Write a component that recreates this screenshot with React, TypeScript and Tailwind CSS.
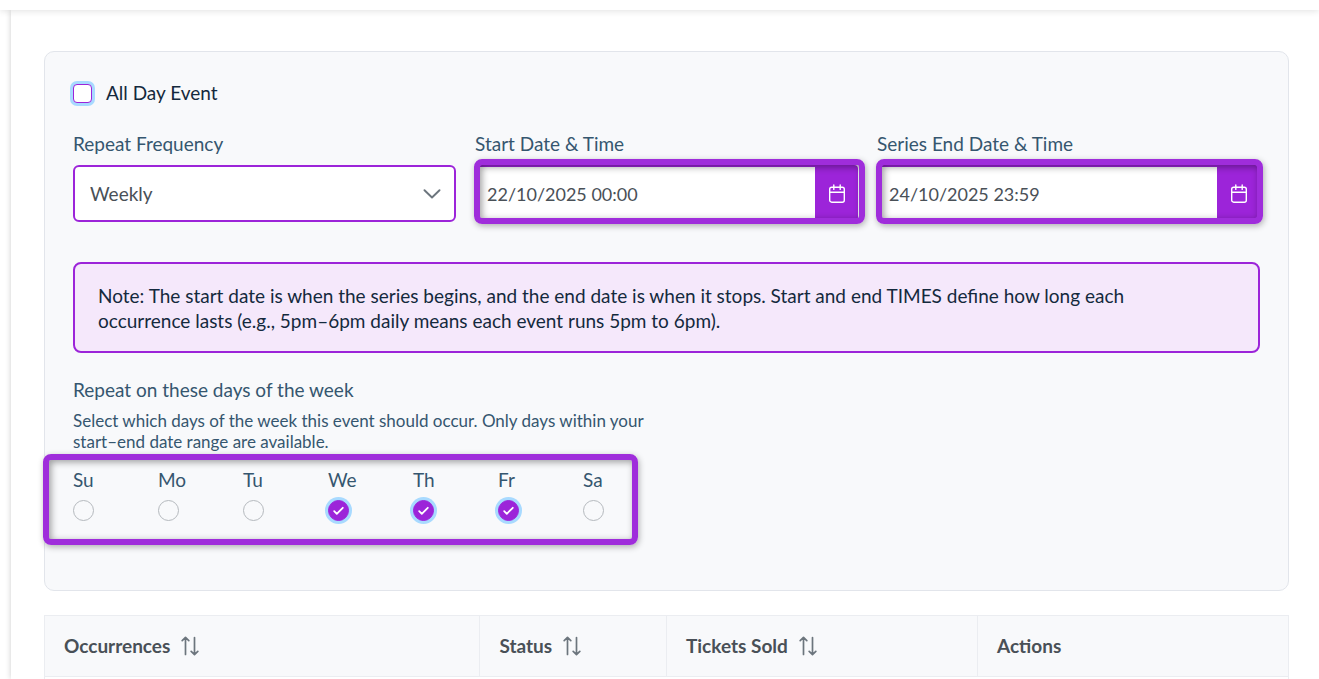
import { useState } from "react";
import type { ReactNode } from "react";

const days = ["Su", "Mo", "Tu", "We", "Th", "Fr", "Sa"];

const columns = [
  { name: "Occurrences", sortable: true, width: "w-[35%]" },
  { name: "Status", sortable: true, width: "w-[15%]" },
  { name: "Tickets Sold", sortable: true, width: "w-[25%]" },
  { name: "Actions", sortable: false, width: "w-[25%]" },
];

function CalendarIcon() {
  return (
    <svg width="18" height="20" viewBox="0 0 18 20" fill="none" stroke="#fff" strokeWidth="1.4" strokeLinecap="round" aria-hidden="true">
      <rect x="1.7" y="3.2" width="14.6" height="15" rx="2" />
      <path d="M1.7 8.2h14.6M5.8 1v4.4M12.2 1v4.4" />
    </svg>
  );
}

function SortIcon() {
  return (
    <svg width="18" height="20" viewBox="0 0 18 20" fill="none" stroke="#6c757d" strokeWidth="1.7" strokeLinecap="round" strokeLinejoin="round" aria-hidden="true">
      <path d="M4.5 18.5v-17M1.2 4.6l3.3-3.2 3.3 3.2M13.5 1.5v17M10.2 15.4l3.3 3.2 3.3-3.2" />
    </svg>
  );
}

function Highlight({ className }: { className: string }) {
  return (
    <span
      aria-hidden="true"
      className={`pointer-events-none absolute rounded-lg border-6 border-[#9f2ddb] shadow-[1px_2px_6px_rgba(0,0,0,0.3),inset_2px_2px_7px_rgba(0,0,0,0.38)] ${className}`}
    />
  );
}

function DateField({ id, label, initial, children }: { id: string; label: string; initial: string; children: ReactNode }) {
  const [value, setValue] = useState(initial);
  return (
    <div>
      <label htmlFor={id} className="block leading-6 text-[#35566f]">{label}</label>
      <div className="relative mt-[9px] flex h-[57px]">
        <input
          id={id}
          value={value}
          onChange={(e) => setValue(e.target.value)}
          className="w-full min-w-0 flex-1 rounded-l border-2 border-r-0 border-[#9c24d9] bg-white pt-0.5 pl-[10px] text-[18px] text-[#495057] outline-none"
        />
        <button type="button" aria-label={`Choose ${label}`} className="flex w-[43px] items-center justify-center rounded-r bg-[#9c24d9]">
          <CalendarIcon />
        </button>
        {children}
      </div>
    </div>
  );
}

export default function App() {
  const [allDay, setAllDay] = useState(false);
  const [selected, setSelected] = useState(["We", "Th", "Fr"]);
  const toggle = (day: string) =>
    setSelected((s) => (s.includes(day) ? s.filter((d) => d !== day) : [...s, day]));

  return (
    <div className="flex h-screen flex-col overflow-hidden bg-white font-['Lato','Noto_Sans',sans-serif] text-[19px] text-[#14293d]">
      <header className="relative z-10 h-[10px] shrink-0 bg-white shadow-[0_1px_7px_rgba(0,0,0,0.12)]" />
      <div className="flex min-h-0 flex-1">
        <aside className="w-[11px] shrink-0 bg-white" />
        <main className="min-w-0 flex-1 bg-white pt-[41px] pr-[30px] pl-[33px] shadow-[0_0_6px_rgba(0,0,0,0.2)]">
          <section className="rounded-[10px] border border-[#e2e5eb] bg-[#f8f9fb] px-7 pt-[29px] pb-[69px]">
            <div className="flex h-6 items-center gap-[14px]">
              <input
                id="all-day"
                type="checkbox"
                checked={allDay}
                onChange={() => setAllDay(!allDay)}
                className="size-[19px] appearance-none rounded border border-[#9c24d9] bg-white ring-3 ring-[#a8daff] checked:bg-[#9c24d9]"
              />
              <label htmlFor="all-day">All Day Event</label>
            </div>

            <div className="mt-[27px] grid grid-cols-3 gap-[19px]">
              <div>
                <label htmlFor="frequency" className="block leading-6 text-[#35566f]">Repeat Frequency</label>
                <div className="relative mt-[9px]">
                  <select id="frequency" defaultValue="Weekly" className="h-[57px] w-full appearance-none rounded-md border-2 border-[#9c24d9] bg-white px-[15px] pt-0.5 text-[#495057] outline-none">
                    <option>Daily</option>
                    <option>Weekly</option>
                    <option>Monthly</option>
                  </select>
                  <svg className="pointer-events-none absolute top-6 right-[15px]" width="18" height="10" viewBox="0 0 18 10" fill="none" stroke="#6c757d" strokeWidth="1.9" strokeLinecap="round" strokeLinejoin="round" aria-hidden="true">
                    <path d="M1.5 1.2 9 8.5l7.5-7.3" />
                  </svg>
                </div>
              </div>
              <DateField id="start" label="Start Date & Time" initial="22/10/2025 00:00">
                <Highlight className="-top-1.5 -right-[7px] -bottom-0.5 -left-px" />
              </DateField>
              <DateField id="end" label="Series End Date & Time" initial="24/10/2025 23:59">
                <Highlight className="-top-1.5 -right-[3px] -bottom-0.5 -left-px" />
              </DateField>
            </div>

            <p className="mt-10 rounded-lg border-2 border-[#9c24d9] bg-[#f5e8fb] pt-[19px] pr-20 pb-[18px] pl-[23px] leading-[25px]">
              Note: The start date is when the series begins, and the end date is when it stops. Start and end TIMES define how long each occurrence lasts (e.g., 5pm–6pm daily means each event runs 5pm to 6pm).
            </p>

            <fieldset className="mt-[25px] text-[#35566f]">
              <legend className="leading-6">Repeat on these days of the week</legend>
              <p className="mt-2 w-[590px] max-w-full text-[17px] leading-[21px]">
                Select which days of the week this event should occur. Only days within your start–end date range are available.
              </p>
              <div className="relative mt-4 flex w-fit gap-16">
                {days.map((day) => (
                  <div key={day} className="w-[21px]">
                    <label htmlFor={`day-${day}`} className="block leading-6">{day}</label>
                    <div className="mt-2 grid">
                      <input
                        id={`day-${day}`}
                        type="checkbox"
                        checked={selected.includes(day)}
                        onChange={() => toggle(day)}
                        className="peer col-start-1 row-start-1 size-[21px] appearance-none rounded-full border border-[#b5b9be] checked:border-[#9c24d9] checked:bg-[#9c24d9] checked:ring-3 checked:ring-[#a8daff]"
                      />
                      <svg className="pointer-events-none invisible col-start-1 row-start-1 peer-checked:visible" width="21" height="21" viewBox="0 0 21 21" fill="none" stroke="#fff" strokeWidth="1.8" strokeLinecap="round" strokeLinejoin="round" aria-hidden="true">
                        <path d="m6.2 11.2 2.6 2.6 6-6" />
                      </svg>
                    </div>
                  </div>
                ))}
                <Highlight className="-top-[14px] -right-[34px] -bottom-6 -left-[30px]" />
              </div>
            </fieldset>
          </section>

          <table className="mt-6 w-full table-fixed border-collapse text-left text-[#495057]">
            <thead>
              <tr className="h-[61px] bg-[#f8f9fb]">
                {columns.map((c) => (
                  <th key={c.name} scope="col" className={`border border-[#ebedf1] px-[19px] font-bold ${c.width}`}>
                    {c.sortable ? (
                      <button type="button" className="flex items-center gap-[11px]">
                        {c.name}
                        <SortIcon />
                      </button>
                    ) : (
                      c.name
                    )}
                  </th>
                ))}
              </tr>
            </thead>
            <tbody>
              <tr className="h-[62px]">
                <td colSpan={4} className="border border-[#ebedf1]" />
              </tr>
            </tbody>
          </table>
        </main>
      </div>
    </div>
  );
}
